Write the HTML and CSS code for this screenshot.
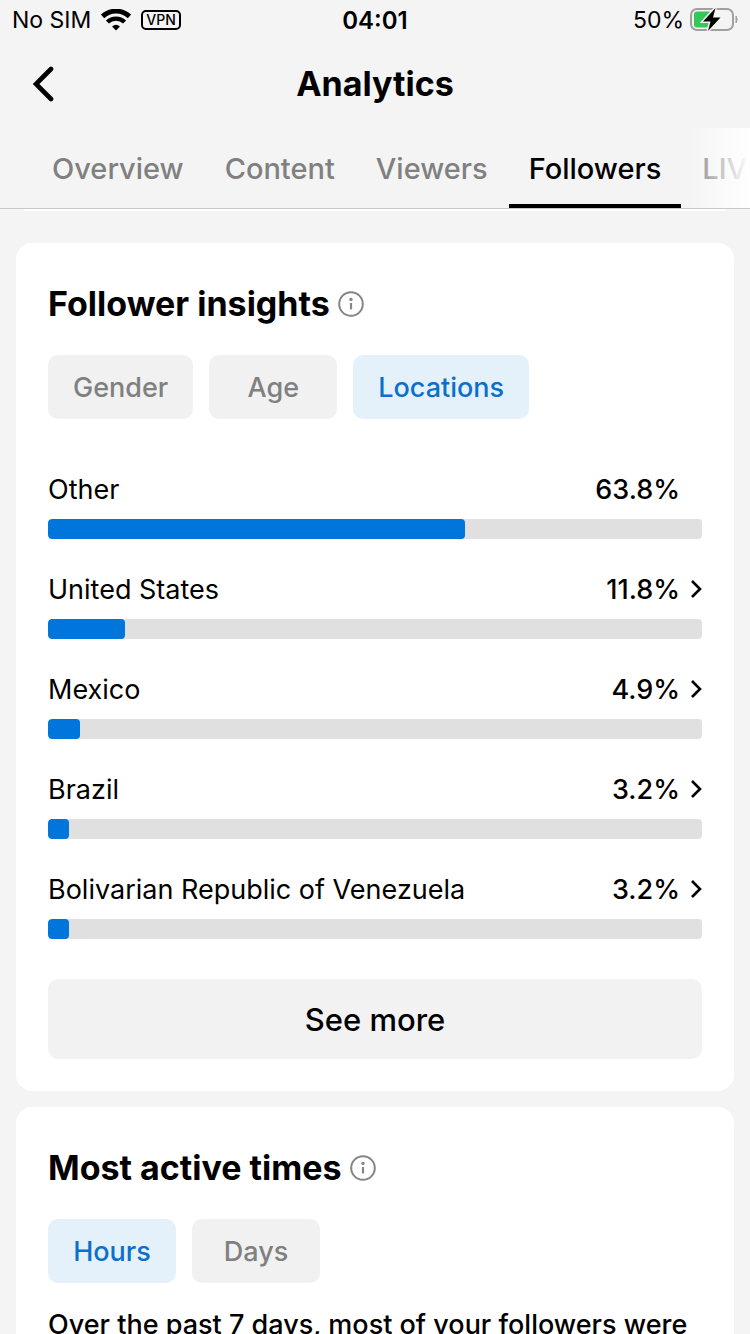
FILE: index.html
```html
<!DOCTYPE html>
<html lang="en">

<head>
    <meta charset="UTF-8">
    <meta name="viewport" content="width=device-width, initial-scale=1.0">
    <title>Analytics</title>
    <link rel="stylesheet" href="styles.css">
</head>

<body>

    <div class="status-bar">
        <div class="status-left">
            <span>No SIM</span>
            <svg class="wifi" viewBox="0 0 30 22" width="30" height="22">
                <path d="M1.6 7.4 A19.5 19.5 0 0 1 28.4 7.4" fill="none" stroke="#000" stroke-width="4.8" />
                <path d="M6.4 13 A12.6 12.6 0 0 1 23.6 13" fill="none" stroke="#000" stroke-width="4.4" />
                <path d="M11 17.4 Q15 14 19 17.4 L15 21.6 Z" fill="#000" />
            </svg>
            <span class="vpn">VPN</span>
        </div>
        <div class="status-time">04:01</div>
        <div class="status-right">
            <span>50%</span>
            <svg viewBox="0 0 48 26" width="48" height="26">
                <rect x="1" y="2" width="42" height="21" rx="6" fill="none" stroke="#a0a0a0" stroke-width="2" />
                <path d="M46 9 Q48.4 12.5 46 16 Z" fill="#a0a0a0" stroke="#a0a0a0" />
                <path d="M7 4.5 H22 V20.5 H7 Q4 20.5 4 17.5 V7.5 Q4 4.5 7 4.5 Z" fill="#34c759" />
                <path d="M25.5 1 L13 14.5 H20.5 L18 24 L30.5 10.5 H23 Z" fill="#000" stroke="#f4f4f4" stroke-width="3" paint-order="stroke" />
            </svg>
        </div>
    </div>

    <header class="header">
        <button class="back" aria-label="Back">
            <svg viewBox="0 0 24 36" width="24" height="36">
                <path d="M20 3 L5 18 L20 33" fill="none" stroke="#000" stroke-width="4.6" stroke-linecap="round" />
            </svg>
        </button>
        <h1>Analytics</h1>
    </header>

    <nav class="tabs">
        <button class="tab">Overview</button>
        <button class="tab">Content</button>
        <button class="tab">Viewers</button>
        <button class="tab active">Followers</button>
        <button class="tab">LIVE</button>
    </nav>

    <main class="content">
        <div class="card-end"></div>

        <section class="card">
            <div class="card-title">
                <h2>Follower insights</h2>
                <button class="info" aria-label="About follower insights">
                    <svg viewBox="0 0 26 26" width="26" height="26">
                        <circle cx="13" cy="13" r="11.8" fill="none" stroke="#858585" stroke-width="2" />
                        <circle cx="13" cy="8.4" r="1.7" fill="#858585" />
                        <path d="M13 12 V18.4" stroke="#858585" stroke-width="2.2" />
                    </svg>
                </button>
            </div>
            <div class="chips">
                <button class="chip">Gender</button>
                <button class="chip">Age</button>
                <button class="chip selected">Locations</button>
            </div>
            <ul class="locations">
                <li>
                    <div class="row">
                        <span>Other</span>
                        <span class="value">63.8%</span>
                    </div>
                    <div class="bar"><div class="fill" style="width: 63.8%;"></div></div>
                </li>
                <li>
                    <div class="row">
                        <span>United States</span>
                        <span class="value">11.8%</span>
                        <svg class="chevron" viewBox="0 0 12 20" width="12" height="20"><path d="M2 2 L10 10 L2 18" /></svg>
                    </div>
                    <div class="bar"><div class="fill" style="width: 11.8%;"></div></div>
                </li>
                <li>
                    <div class="row">
                        <span>Mexico</span>
                        <span class="value">4.9%</span>
                        <svg class="chevron" viewBox="0 0 12 20" width="12" height="20"><path d="M2 2 L10 10 L2 18" /></svg>
                    </div>
                    <div class="bar"><div class="fill" style="width: 4.9%;"></div></div>
                </li>
                <li>
                    <div class="row">
                        <span>Brazil</span>
                        <span class="value">3.2%</span>
                        <svg class="chevron" viewBox="0 0 12 20" width="12" height="20"><path d="M2 2 L10 10 L2 18" /></svg>
                    </div>
                    <div class="bar"><div class="fill" style="width: 3.2%;"></div></div>
                </li>
                <li>
                    <div class="row">
                        <span>Bolivarian Republic of Venezuela</span>
                        <span class="value">3.2%</span>
                        <svg class="chevron" viewBox="0 0 12 20" width="12" height="20"><path d="M2 2 L10 10 L2 18" /></svg>
                    </div>
                    <div class="bar"><div class="fill" style="width: 3.2%;"></div></div>
                </li>
            </ul>
            <button class="see-more">See more</button>
        </section>

        <section class="card">
            <div class="card-title">
                <h2>Most active times</h2>
                <button class="info" aria-label="About most active times">
                    <svg viewBox="0 0 26 26" width="26" height="26">
                        <circle cx="13" cy="13" r="11.8" fill="none" stroke="#858585" stroke-width="2" />
                        <circle cx="13" cy="8.4" r="1.7" fill="#858585" />
                        <path d="M13 12 V18.4" stroke="#858585" stroke-width="2.2" />
                    </svg>
                </button>
            </div>
            <div class="chips">
                <button class="chip selected">Hours</button>
                <button class="chip">Days</button>
            </div>
            <p class="summary">Over the past 7 days, most of your followers were</p>
        </section>
    </main>

</body>

</html>
```

FILE: styles.css
```css
* {
    box-sizing: border-box;
}

body {
    display: flex;
    flex-direction: column;
    height: 100vh;
    margin: 0;
    background-color: #f4f4f4;
    color: #000;
    font-family: Inter, 'Liberation Sans', sans-serif;
    overflow: hidden;
}

button {
    padding: 0;
    border: none;
    background: none;
    color: inherit;
    font-family: inherit;
    cursor: pointer;
}

h1, h2, p, ul {
    margin: 0;
}

svg {
    display: block;
}

/* Status bar */
.status-bar {
    display: grid;
    grid-template-columns: 1fr auto 1fr;
    align-items: center;
    flex-shrink: 0;
    height: 40px;
    padding: 0 12px;
    font-size: 23px;
}

.status-left,
.status-right {
    display: flex;
    align-items: center;
    gap: 10px;
}

.status-right {
    justify-content: flex-end;
    gap: 6px;
}

.status-time {
    font-size: 24px;
    font-weight: 600;
}

.vpn {
    padding: 0 3px;
    border: 2px solid #000;
    border-radius: 5px;
    font-size: 14px;
    font-weight: 500;
    line-height: 16px;
}

/* Header */
.header {
    display: grid;
    grid-template-columns: 1fr auto 1fr;
    align-items: center;
    flex-shrink: 0;
    height: 88px;
    padding: 0 31px;
}

.back {
    justify-self: start;
}

h1,
h2 {
    font-size: 34px;
    font-weight: 700;
    line-height: 40px;
}

/* Tabs */
.tabs {
    position: relative;
    display: flex;
    gap: 1px;
    flex-shrink: 0;
    height: 81px;
    padding-left: 32px;
    border-bottom: 1px solid #c8c8c8;
    overflow: hidden;
}

.tabs::after {
    content: '';
    position: absolute;
    top: 0;
    right: 0;
    bottom: 0;
    width: 64px;
    background: linear-gradient(to right, rgba(255, 255, 255, 0), #fff);
}

.tab {
    flex-shrink: 0;
    padding: 0 20px;
    border-top: 4px solid transparent;
    border-bottom: 4px solid transparent;
    color: #808080;
    font-size: 29px;
    font-weight: 500;
}

.tab.active {
    border-bottom-color: #000;
    color: #000;
}

/* Cards */
.content {
    flex: 1;
    min-height: 0;
    padding: 0 16px;
    overflow-y: auto;
    scrollbar-width: none;
}

.card-end {
    height: 2px;
    margin: 0 8px 32px;
    border-radius: 0 0 8px 8px;
    background-color: #fff;
}

.card {
    margin-bottom: 16px;
    padding: 32px;
    border-radius: 16px;
    background-color: #fff;
}

.card-title {
    display: flex;
    align-items: center;
    gap: 8px;
    height: 58px;
    margin-bottom: 22px;
}

.chips {
    display: flex;
    gap: 16px;
}

.chip {
    min-width: 128px;
    height: 64px;
    padding: 0 25px;
    border-radius: 10px;
    background-color: #f1f1f1;
    color: #808080;
    font-size: 27px;
    font-weight: 500;
}

.chip.selected {
    background-color: #e4f1fb;
    color: #0a70c9;
}

/* Location bars */
.locations {
    display: flex;
    flex-direction: column;
    gap: 30px;
    padding: 50px 0 40px;
    list-style: none;
}

.row {
    display: flex;
    align-items: center;
    height: 40px;
    margin-bottom: 10px;
    font-size: 27px;
}

.value {
    margin-left: auto;
    margin-right: 22px;
    font-weight: 500;
}

.chevron {
    margin-left: -12px;
    fill: none;
    stroke: #000;
    stroke-width: 2.6;
}

.bar {
    height: 20px;
    border-radius: 4px;
    background-color: #e0e0e0;
    overflow: hidden;
}

.fill {
    height: 100%;
    border-radius: 4px;
    background-color: #0075dc;
}

.see-more {
    width: 100%;
    height: 80px;
    border-radius: 10px;
    background-color: #f2f2f2;
    font-size: 31px;
    font-weight: 500;
}

.summary {
    margin-top: 22px;
    font-size: 27px;
    font-weight: 500;
    line-height: 40px;
}
```
